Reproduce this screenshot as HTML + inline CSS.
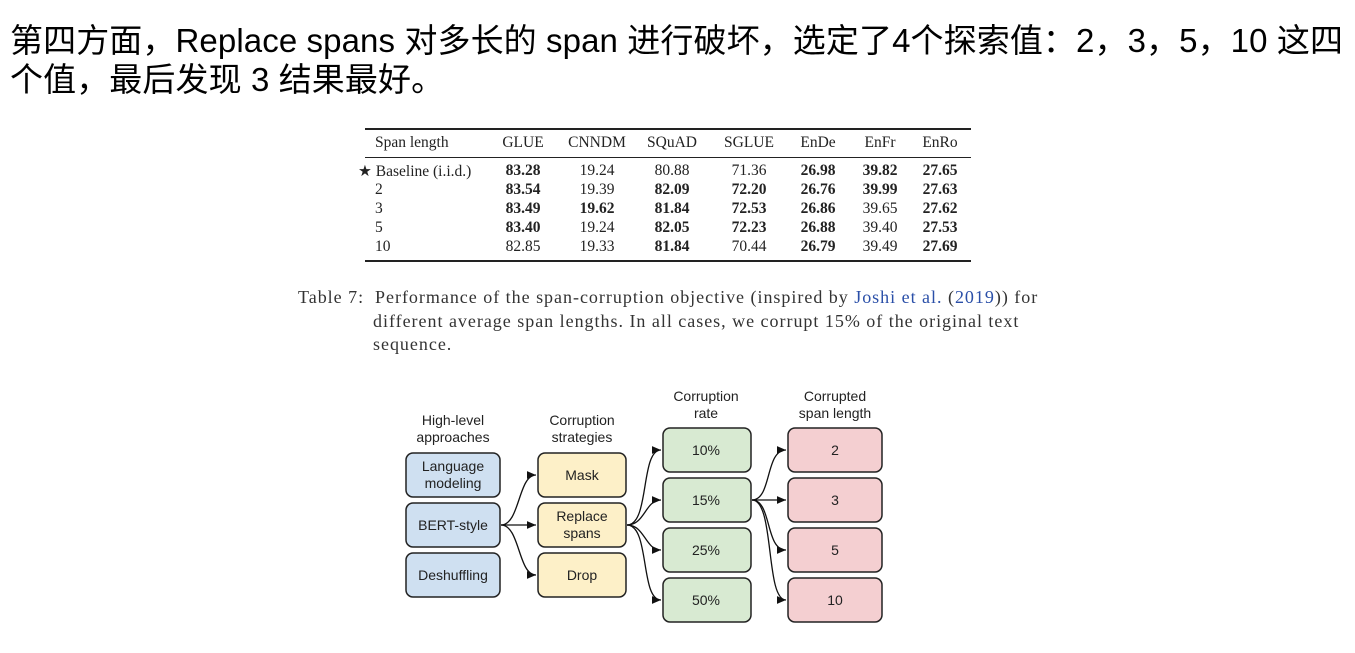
<!DOCTYPE html>
<html><head><meta charset="utf-8"><style>
body{margin:0;width:1355px;height:653px;background:#fff;position:relative;overflow:hidden}
.h{position:absolute;left:10px;font-family:"Liberation Sans","Noto Sans CJK SC",sans-serif;font-size:33px;color:#000;white-space:nowrap;line-height:40px;letter-spacing:0.1px}
.t{position:absolute;font-family:"Liberation Serif",serif;font-size:15.5px;color:#222;white-space:nowrap;transform:translateX(-50%)}
.b{font-weight:bold}
.cap{position:absolute;font-family:"Liberation Serif",serif;font-size:18px;letter-spacing:0.98px;color:#333;white-space:nowrap}
.rule{position:absolute;left:365px;width:606px;background:#222}
</style></head><body>
<div class="h" style="top:21px">第四方面，Replace spans 对多长的 span 进行破坏，选定了4个探索值：2，3，5，10 这四</div>
<div class="h" style="top:60px">个值，最后发现 3 结果最好。</div>

<div class="rule" style="top:128px;height:2px"></div>
<div class="rule" style="top:157px;height:1px"></div>
<div class="rule" style="top:260px;height:2px"></div>

<div id="tbl"></div>
<div class="cap" style="left:298px;top:287px">Table 7:&nbsp; Performance of the span-corruption objective (inspired by <span style="color:#2a4fa8">Joshi et al.</span> (<span style="color:#2a4fa8">2019</span>)) for</div>
<div class="cap" style="left:373px;top:311px">different average span lengths. In all cases, we corrupt 15% of the original text</div>
<div class="cap" style="left:373px;top:334px">sequence.</div>

<svg style="position:absolute;left:0;top:0" width="1355" height="653">
<defs><marker id="a" markerWidth="8" markerHeight="8" refX="7" refY="3" orient="auto"><path d="M0,0 L7,3 L0,6z" fill="#111"/></marker></defs>
<g font-family="Liberation Sans,sans-serif" font-size="14" fill="#222" text-anchor="middle">
<text x="453" y="425">High-level</text><text x="453" y="442">approaches</text>
<text x="582" y="425">Corruption</text><text x="582" y="442">strategies</text>
<text x="706" y="401">Corruption</text><text x="706" y="418">rate</text>
<text x="835" y="401">Corrupted</text><text x="835" y="418">span length</text>
</g>
<g stroke="#222" stroke-width="1.5">
<rect x="406" y="453" width="94" height="44" rx="7" fill="#cfe0f1"/>
<rect x="406" y="503" width="94" height="44" rx="7" fill="#cfe0f1"/>
<rect x="406" y="553" width="94" height="44" rx="7" fill="#cfe0f1"/>
<rect x="538" y="453" width="88" height="44" rx="7" fill="#fdf0c8"/>
<rect x="538" y="503" width="88" height="44" rx="7" fill="#fdf0c8"/>
<rect x="538" y="553" width="88" height="44" rx="7" fill="#fdf0c8"/>
<rect x="663" y="428" width="88" height="44" rx="7" fill="#d8ead2"/>
<rect x="663" y="478" width="88" height="44" rx="7" fill="#d8ead2"/>
<rect x="663" y="528" width="88" height="44" rx="7" fill="#d8ead2"/>
<rect x="663" y="578" width="88" height="44" rx="7" fill="#d8ead2"/>
<rect x="788" y="428" width="94" height="44" rx="7" fill="#f4cfd1"/>
<rect x="788" y="478" width="94" height="44" rx="7" fill="#f4cfd1"/>
<rect x="788" y="528" width="94" height="44" rx="7" fill="#f4cfd1"/>
<rect x="788" y="578" width="94" height="44" rx="7" fill="#f4cfd1"/>
</g>
<g fill="none" stroke="#111" stroke-width="1.3" marker-end="url(#a)">
<path d="M501,525 C520,525 518,475 536,475"/>
<path d="M501,525 L536,525"/>
<path d="M501,525 C520,525 518,575 536,575"/>
<path d="M627,525 C650,525 640,450 661,450"/>
<path d="M627,525 C645,525 645,500 661,500"/>
<path d="M627,525 C645,525 645,550 661,550"/>
<path d="M627,525 C650,525 640,600 661,600"/>
<path d="M752,500 C772,500 765,450 786,450"/>
<path d="M752,500 L786,500"/>
<path d="M752,500 C772,500 765,550 786,550"/>
<path d="M752,500 C775,500 765,600 786,600"/>
</g>
<g font-family="Liberation Sans,sans-serif" font-size="14" fill="#222" text-anchor="middle">
<text x="453" y="471">Language</text><text x="453" y="488">modeling</text>
<text x="453" y="530">BERT-style</text><text x="453" y="580">Deshuffling</text>
<text x="582" y="480">Mask</text><text x="582" y="521">Replace</text><text x="582" y="538">spans</text><text x="582" y="580">Drop</text>
<text x="706" y="455">10%</text><text x="706" y="505">15%</text><text x="706" y="555">25%</text><text x="706" y="605">50%</text>
<text x="835" y="455">2</text><text x="835" y="505">3</text><text x="835" y="555">5</text><text x="835" y="605">10</text>
</g>
</svg>
<script>
var cols=[523,597,672,749,818,880,940];
var hdr=["GLUE","CNNDM","SQuAD","SGLUE","EnDe","EnFr","EnRo"];
var rows=[["★ Baseline (i.i.d.)","*83.28","19.24","80.88","71.36","*26.98","*39.82","*27.65"],
["2","*83.54","19.39","*82.09","*72.20","*26.76","*39.99","*27.63"],
["3","*83.49","*19.62","*81.84","*72.53","*26.86","39.65","*27.62"],
["5","*83.40","19.24","*82.05","*72.23","*26.88","39.40","*27.53"],
["10","82.85","19.33","*81.84","70.44","*26.79","39.49","*27.69"]];
var h='<div class="t" style="left:375px;top:134px;transform:none">Span length</div>';
hdr.forEach(function(x,i){h+='<div class="t" style="left:'+cols[i]+'px;top:134px">'+x+'</div>';});
var ys=[162,181,200,219,238];
rows.forEach(function(r,j){
 h+='<div class="t" style="left:'+(j==0?358:375)+'px;top:'+ys[j]+'px;transform:none">'+r[0]+'</div>';
 for(var i=1;i<8;i++){var v=r[i],b=v[0]=='*';if(b)v=v.slice(1);
 h+='<div class="t'+(b?' b':'')+'" style="left:'+cols[i-1]+'px;top:'+ys[j]+'px">'+v+'</div>';}
});
document.getElementById('tbl').innerHTML=h;
</script>
</body></html>
